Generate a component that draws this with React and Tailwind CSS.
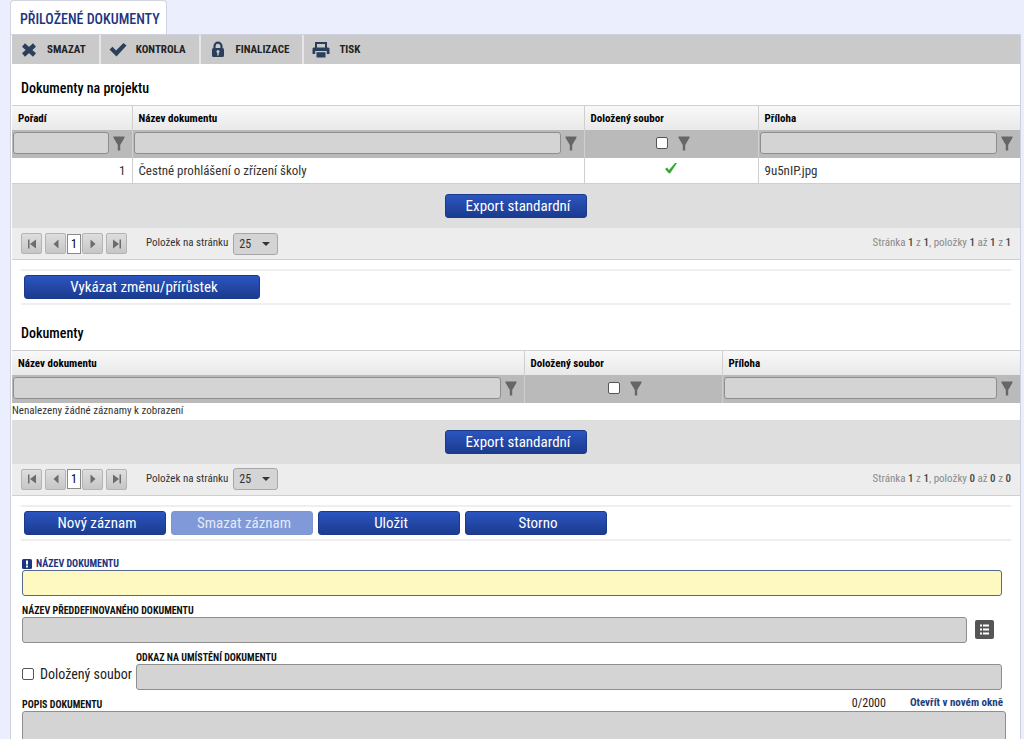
import { useState } from 'react';

const tools = [
    { label: 'SMAZAT', icon: CrossIcon },
    { label: 'KONTROLA', icon: CheckIcon },
    { label: 'FINALIZACE', icon: LockIcon },
    { label: 'TISK', icon: PrintIcon },
];

function CrossIcon() {
    return (
        <svg viewBox="0 0 18 18" className="size-[18px]" fill="none" stroke="#2b3f5c" strokeWidth="4.4">
            <path d="M3.500 4l11 10M14.500 4l-11 10" />
        </svg>
    );
}

function CheckIcon() {
    return (
        <svg viewBox="0 0 18 18" className="size-[18px]" fill="#2b3f5c">
            <path d="M0.500 8.500L3.500 5.800L7 9.500L14.500 2L17.500 4.500L7.500 15.500z" />
        </svg>
    );
}

function LockIcon() {
    return (
        <svg viewBox="0 0 18 18" className="size-[18px]">
            <path d="M5.500 8V5.200a3.500 3.500 0 0 1 7 0V8" fill="none" stroke="#2b3f5c" strokeWidth="2.2" />
            <rect x="3" y="7" width="12" height="9" rx="1.500" fill="#2b3f5c" />
            <circle cx="9" cy="10.500" r="1.500" fill="#cacaca" />
            <path d="M8.300 11h1.400v3.500h-1.400z" fill="#cacaca" />
        </svg>
    );
}

function PrintIcon() {
    return (
        <svg viewBox="0 0 18 18" className="size-[18px]" fill="#2b3f5c">
            <path d="M3 1h12v6h-2V3H5v4H3z" />
            <path d="M1.500 6.500h15l1 1V13h-2.700v-3H3.200v3H0.500V7.500z" />
            <path d="M4.500 11.200h9v5.300h-9z" />
        </svg>
    );
}

function FunnelButton() {
    return (
        <button type="button" aria-label="Filtr" className="shrink-0">
            <svg viewBox="0 0 12 16" className="w-3 h-4" fill="#666">
                <path d="M0.500 1.500h11v1.200L7.200 10V15.500H4.800V10L0.500 2.700z" />
            </svg>
        </button>
    );
}

function FilterText({ label }) {
    return (
        <div className="flex items-center gap-1 pl-px pr-[7px] pb-px">
            <input type="text" aria-label={label} className="min-w-0 flex-1 h-[22px] px-2 rounded-[3px] border border-[#8e8e8e] bg-[#d4d4d4]" />
            <FunnelButton />
        </div>
    );
}

function Tick({ id, label }) {
    return (
        <input type="checkbox" id={id} aria-label={label} className="appearance-none shrink-0 size-3 rounded-[2px] border border-[#555] bg-white checked:bg-[#1f3f9c]" />
    );
}

function FilterCheck({ label }) {
    return (
        <div className="flex items-center justify-center gap-[10px] pl-1 pb-px">
            <Tick label={label} />
            <FunnelButton />
        </div>
    );
}

function Th({ children }) {
    return <th className="h-6 pt-[2px] pl-[6px] text-left font-bold text-black border-l border-[#cfcfcf] first:border-l-0">{children}</th>;
}

function Td({ children, className = '' }) {
    return <td className={`border-l border-[#cfcfcf] first:border-l-0 ${className}`}>{children}</td>;
}

function BlueButton({ children, className = 'w-[142px]', disabled }) {
    return (
        <button
            type="button"
            disabled={disabled}
            className={`h-6 pl-1 rounded-[3px] border border-[#1c3a8c] bg-linear-to-b from-[#2b55c0] to-[#1b3b8f] text-[15px] leading-[22px] text-white disabled:border-[#8095cc] disabled:from-[#7f99d9] disabled:to-[#7f99d9] disabled:text-[#e4eaf8] ${className}`}
        >
            {children}
        </button>
    );
}

function PagerButton({ label, path }) {
    return (
        <button type="button" aria-label={label} className="flex size-[21px] items-center justify-center rounded-[2px] border border-[#b4b4b4] bg-linear-to-b from-[#dedede] to-[#c6c6c6]">
            <svg viewBox="0 0 12 12" className="size-3" fill="#6c6c6c">
                <path d={path} />
            </svg>
        </button>
    );
}

function Pager({ id, count, from }) {
    return (
        <div className="flex items-center h-8 px-[9px] border-b border-[#cfcfcf] bg-[#ededed] text-[11px]">
            <PagerButton label="První" path="M2 1.500h1.500v9H2zM10 1.500v9L4 6z" />
            <div className="flex items-center gap-px mx-[3px]">
                <PagerButton label="Předchozí" path="M8.500 1.500v9L3.500 6z" />
                <button type="button" className="w-[14px] h-5 border border-[#8a8a8a] bg-white text-xs text-black">1</button>
                <PagerButton label="Další" path="M3.500 1.500v9l5-4.500z" />
            </div>
            <PagerButton label="Poslední" path="M8.500 1.500H10v9H8.500zM2 1.500v9L8 6z" />
            <label htmlFor={id} className="ml-[19px] mr-[5px]">Položek na stránku</label>
            <div className="grid items-center">
                <select id={id} className="appearance-none col-start-1 row-start-1 w-[45px] h-[22px] pl-[5px] rounded-[3px] border border-[#a6a6a6] bg-[#d4d4d4] text-xs">
                    <option>25</option>
                    <option>50</option>
                </select>
                <svg viewBox="0 0 8 4" className="col-start-1 row-start-1 justify-self-end mr-2 w-2 h-1 pointer-events-none" fill="#333">
                    <path d="M0 0h8L4 4z" />
                </svg>
            </div>
            <p className="ml-auto text-[#8a8a8a]">
                Stránka <b className="font-medium text-[#444]">1</b> z <b className="font-medium text-[#444]">1</b>, položky{' '}
                <b className="font-medium text-[#444]">{from}</b> až <b className="font-medium text-[#444]">{count}</b> z{' '}
                <b className="font-medium text-[#444]">{count}</b>
            </p>
        </div>
    );
}

function ExportBar() {
    return (
        <div className="flex items-center justify-center h-11 bg-[#dedede]">
            <BlueButton>Export standardní</BlueButton>
        </div>
    );
}

function Actions({ children }) {
    return <div className="flex gap-[5px] mx-[9px] mt-[9px] px-[3px] py-1 border-y-2 border-[#efefef]">{children}</div>;
}

const fieldClass = 'block w-full h-[26px] px-2 rounded-[3px] border border-[#8e8e8e] bg-[#d4d4d4]';
const captionClass = 'block text-[10px] leading-3 font-bold text-[#111]';

function App() {
    const [text, setText] = useState('');

    return (
        <div className="h-screen overflow-hidden bg-[#ebeffd] pl-[10px] pr-[3px] text-[#333] font-['Roboto_Condensed','Liberation_Sans_Narrow',Roboto,sans-serif]">
            <nav className="flex">
                <a href="#prilozene" className="h-[34px] pl-[9px] pr-[6px] pt-px leading-[34px] text-sm font-medium text-[#1c3580] bg-white rounded-t border border-b-0 border-[#d2d4de]">
                    PŘILOŽENÉ DOKUMENTY
                </a>
            </nav>
            <main className="border-x border-t border-[#cfd2de] bg-white min-h-screen pl-px">
                <div className="flex h-[29px] bg-[#cacaca]">
                    {tools.map(({ label, icon: Icon }) => (
                        <button key={label} type="button" className="flex items-center gap-[9px] pl-2 pr-[13px] text-[11px] font-bold text-[#222] border-r-2 border-[#e6e6e6] last:border-r-0">
                            <Icon />
                            <span className="pt-px">{label}</span>
                        </button>
                    ))}
                </div>

                <h2 className="px-[9px] pt-[14px] pb-[7px] leading-5 text-sm font-medium text-black">Dokumenty na projektu</h2>
                <table className="w-full table-fixed border-collapse border-y border-[#cfcfcf] text-[11px]">
                    <colgroup>
                        <col className="w-[120px]" />
                        <col />
                        <col className="w-[174px]" />
                        <col className="w-[262px]" />
                    </colgroup>
                    <thead>
                        <tr className="bg-linear-to-b from-[#f8f8f8] to-[#e9e9e9]">
                            <Th>Pořadí</Th>
                            <Th>Název dokumentu</Th>
                            <Th>Doložený soubor</Th>
                            <Th>Příloha</Th>
                        </tr>
                        <tr className="h-7 bg-[#bababa]">
                            <Td><FilterText label="Pořadí" /></Td>
                            <Td><FilterText label="Název dokumentu" /></Td>
                            <Td><FilterCheck label="Doložený soubor" /></Td>
                            <Td><FilterText label="Příloha" /></Td>
                        </tr>
                    </thead>
                    <tbody>
                        <tr className="h-[26px] text-[13px]">
                            <Td className="pr-[6px] text-right">1</Td>
                            <Td className="pl-[6px]">Čestné prohlášení o zřízení školy</Td>
                            <Td>
                                <svg viewBox="0 0 12 12" className="size-3 mx-auto mb-1" fill="#37a836">
                                    <path d="M0 7l2-1.500L4 8 10 1l2 0L5 11.500 3.500 11z" />
                                </svg>
                            </Td>
                            <Td className="pl-[6px]">9u5nIP.jpg</Td>
                        </tr>
                    </tbody>
                </table>
                <ExportBar />
                <Pager id="size-project" from="1" count="1" />
                <Actions>
                    <BlueButton className="w-[236px]">Vykázat změnu/přírůstek</BlueButton>
                </Actions>

                <h2 className="px-[9px] pt-[18px] pb-[7px] leading-5 text-sm font-medium text-black">Dokumenty</h2>
                <table className="w-full table-fixed border-collapse border-t border-[#cfcfcf] text-[11px]">
                    <colgroup>
                        <col />
                        <col className="w-[198px]" />
                        <col className="w-[298px]" />
                    </colgroup>
                    <thead>
                        <tr className="bg-linear-to-b from-[#f8f8f8] to-[#e9e9e9]">
                            <Th>Název dokumentu</Th>
                            <Th>Doložený soubor</Th>
                            <Th>Příloha</Th>
                        </tr>
                        <tr className="h-7 bg-[#bababa]">
                            <Td><FilterText label="Název dokumentu" /></Td>
                            <Td><FilterCheck label="Doložený soubor" /></Td>
                            <Td><FilterText label="Příloha" /></Td>
                        </tr>
                    </thead>
                    <tbody>
                        <tr>
                            <td colSpan={3} className="h-[17px]">Nenalezeny žádné záznamy k zobrazení</td>
                        </tr>
                    </tbody>
                </table>
                <ExportBar />
                <Pager id="size-docs" from="0" count="0" />
                <Actions>
                    <BlueButton>Nový záznam</BlueButton>
                    <BlueButton disabled>Smazat záznam</BlueButton>
                    <BlueButton>Uložit</BlueButton>
                    <BlueButton>Storno</BlueButton>
                </Actions>

                <form className="pl-[10px] pr-[18px] pt-[17px]">
                    <label htmlFor="nazev" className="flex items-center gap-1 text-[10px] leading-3 font-bold text-[#1c3580]">
                        <svg viewBox="0 0 10 10" className="size-[10px]">
                            <rect width="10" height="10" rx="1.500" fill="#1c3580" />
                            <path d="M4 1.500h2v4H4zM4 6.500h2v2H4z" fill="#fff" />
                        </svg>
                        NÁZEV DOKUMENTU
                    </label>
                    <input id="nazev" type="text" className="block w-full h-[26px] px-2 rounded-[3px] border border-[#56678c] bg-[#fdf9c0]" />

                    <label htmlFor="preddef" className={`${captionClass} mt-[9px]`}>NÁZEV PŘEDDEFINOVANÉHO DOKUMENTU</label>
                    <div className="flex items-center gap-2 pr-2">
                        <input id="preddef" type="text" className={fieldClass} />
                        <button type="button" aria-label="Vybrat ze seznamu" className="shrink-0">
                            <svg viewBox="0 0 19 19" className="size-[19px]">
                                <rect width="19" height="19" rx="2" fill="#555" />
                                <path d="M5 4.500h2v2H5zM8 4.500h6v2H8zM5 8.500h2v2H5zM8 8.500h6v2H8zM5 12.500h2v2H5zM8 12.500h6v2H8z" fill="#fff" />
                            </svg>
                        </button>
                    </div>

                    <div className="flex items-end mt-[9px]">
                        <div className="flex items-center gap-[6px] w-[114px] h-8 shrink-0 text-sm text-[#222]">
                            <Tick id="dolozeny" />
                            <label htmlFor="dolozeny" className="whitespace-nowrap">Doložený soubor</label>
                        </div>
                        <div className="flex-1">
                            <label htmlFor="odkaz" className={captionClass}>ODKAZ NA UMÍSTĚNÍ DOKUMENTU</label>
                            <input id="odkaz" type="text" className={fieldClass} />
                        </div>
                    </div>

                    <div className="-mr-1">
                        <div className="flex items-end mt-[5px] pr-[3px]">
                            <label htmlFor="popis" className={captionClass}>POPIS DOKUMENTU</label>
                            <span className="ml-auto mr-6 text-xs text-[#222]">{text.length}/2000</span>
                            <a href="#popis" className="text-[11px] leading-4 font-bold text-[#1c3f80]">Otevřít v novém okně</a>
                        </div>
                        <textarea id="popis" maxLength={2000} value={text} onChange={(e) => setText(e.target.value)} className="block w-full h-24 p-2 rounded-[3px] border border-[#8e8e8e] bg-[#d4d4d4]" />
                    </div>
                </form>
            </main>
        </div>
    );
}

export default App;
